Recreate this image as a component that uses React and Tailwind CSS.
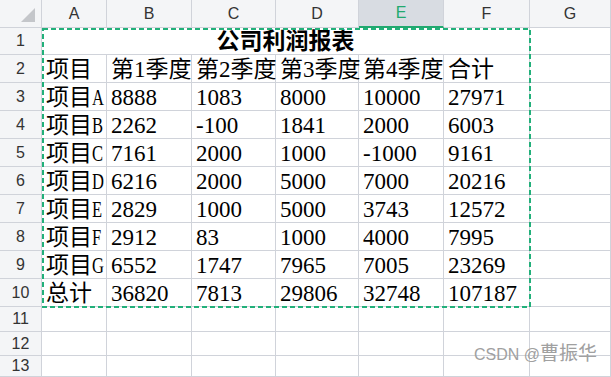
import React from "react";

const cols = ["A", "B", "C", "D", "E", "F", "G"];

const rows = [
  ["项目", "第1季度", "第2季度", "第3季度", "第4季度", "合计"],
  ["项目A", "8888", "1083", "8000", "10000", "27971"],
  ["项目B", "2262", "-100", "1841", "2000", "6003"],
  ["项目C", "7161", "2000", "1000", "-1000", "9161"],
  ["项目D", "6216", "2000", "5000", "7000", "20216"],
  ["项目E", "2829", "1000", "5000", "3743", "12572"],
  ["项目F", "2912", "83", "1000", "4000", "7995"],
  ["项目G", "6552", "1747", "7965", "7005", "23269"],
  ["总计", "36820", "7813", "29806", "32748", "107187"],
];

const line = "border-[#d0d3da]";
const cellFont = { fontFamily: '"Liberation Serif", "Noto Sans CJK SC", serif' };
const headFont = { fontFamily: '"Liberation Sans", "Noto Sans", sans-serif' };

function RowHead({ n }) {
  return (
    <div
      className={`flex items-center justify-center bg-[#f4f5f7] border-r border-b ${line} text-[16px] text-[#333]`}
      style={headFont}
    >
      {n}
    </div>
  );
}

// 项目A etc: the latin letter is a half-width glyph in the original font
function Value({ v }) {
  if (v.startsWith("项目") && v.length === 3) {
    return (
      <>
        项目
        <span className="inline-block w-[12px] origin-left scale-x-[0.72]">{v[2]}</span>
      </>
    );
  }
  return v;
}

function Cell({ children }) {
  return (
    <div
      className={`flex items-center pl-[4px] pt-[1px] border-r border-b ${line} text-[23px] leading-none text-black whitespace-nowrap`}
      style={cellFont}
    >
      {children}
    </div>
  );
}

export default function App() {
  return (
    <div className="relative w-[611px] h-[377px] overflow-hidden bg-white">
      <div className="grid grid-cols-[42px_65px_85px_84px_83px_85px_86px_81px] grid-rows-[28px_27px_repeat(9,28px)_25px_24px_21px]">
        {/* corner */}
        <div className={`relative bg-[#f4f5f7] border-r border-b ${line}`}>
          <svg className="absolute left-[21px] top-[8px]" width="14" height="14" viewBox="0 0 14 14">
            <polygon points="14,0 14,14 0,14" fill="#c4c6ca" />
          </svg>
        </div>
        {cols.map((c) =>
          c === "E" ? (
            <div
              key={c}
              className="flex items-center justify-center bg-[#d8dce2] border-r border-b-2 border-r-[#d0d3da] border-b-[#21a96f] text-[16px] text-[#21a96f]"
              style={headFont}
            >
              {c}
            </div>
          ) : (
            <div
              key={c}
              className={`flex items-center justify-center bg-[#f4f5f7] border-r border-b ${line} text-[16px] text-[#333]`}
              style={headFont}
            >
              {c}
            </div>
          )
        )}

        {/* row 1: merged title */}
        <RowHead n={1} />
        <div
          className={`col-span-6 flex items-center justify-center pt-[1px] border-r border-b ${line} text-[23px] font-bold leading-none text-black`}
          style={cellFont}
        >
          公司利润报表
        </div>
        <div className={`border-r border-b ${line}`} />

        {rows.map((r, i) => (
          <React.Fragment key={i}>
            <RowHead n={i + 2} />
            {r.map((v, j) => (
              <Cell key={j}>
                <Value v={v} />
              </Cell>
            ))}
            <div className={`border-r border-b ${line}`} />
          </React.Fragment>
        ))}

        {[11, 12, 13].map((n) => (
          <React.Fragment key={n}>
            <RowHead n={n} />
            {cols.map((c) => (
              <div key={c} className={`border-r border-b ${line}`} />
            ))}
          </React.Fragment>
        ))}
      </div>

      {/* copy marquee */}
      <svg className="absolute left-[42px] top-[28px] pointer-events-none" width="489" height="280">
        <rect x="1" y="1" width="487" height="278" fill="none" stroke="#22b07a" strokeWidth="2" strokeDasharray="5 3" />
      </svg>

      {/* watermark */}
      <div
        className="absolute right-[14px] bottom-[9px] flex items-baseline text-[#a0a0a0] pointer-events-none"
        style={{ fontFamily: '"Liberation Sans", "Noto Sans CJK SC", sans-serif' }}
      >
        <span className="text-[16px]">CSDN @</span>
        <span className="text-[19px]">曹振华</span>
      </div>
    </div>
  );
}
